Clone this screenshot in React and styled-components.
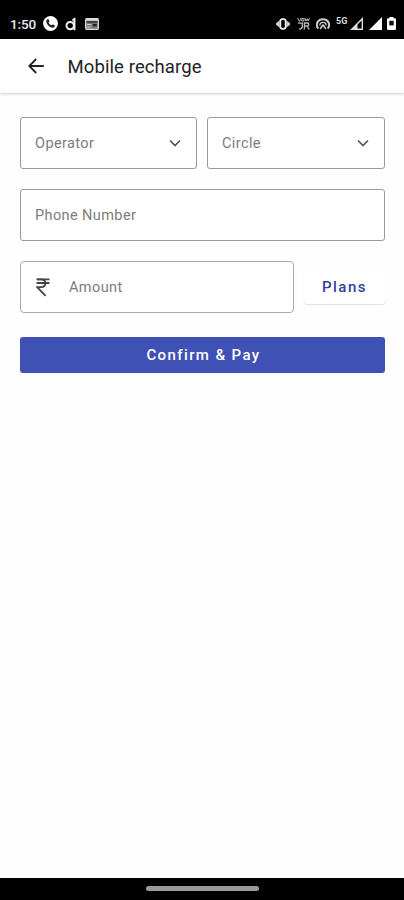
import { useState } from 'react';
import styled, { createGlobalStyle } from 'styled-components';

const CallIcon = () => (
  <svg width="15" height="15" viewBox="0 0 15 15">
    <circle cx="7.5" cy="7.5" r="7.4" fill="#fff" />
    <path
      d="M4.3 3.2 L6 3.4 L6.4 5.6 L5.7 6.4 C6.2 7.7 7.1 8.6 8.6 9.2 L9.5 8.5 L11.6 9 L11.7 10.7 C10.8 11.8 9.3 11.9 7.8 11.2 C5.8 10.3 4.4 8.8 3.6 6.9 C3 5.3 3.3 4 4.3 3.2Z"
      fill="#222"
    />
  </svg>
);

const DailyIcon = () => (
  <svg width="12" height="14" viewBox="0 0 12 14" fill="none" stroke="#f2f2f2">
    <circle cx="5.2" cy="8.6" r="3.7" strokeWidth="2" />
    <path d="M9.4 0.8V13.2" strokeWidth="2.1" />
    <path d="M7 2.9H9.4" strokeWidth="1.4" />
  </svg>
);

const NewsIcon = () => (
  <svg width="14" height="12" viewBox="0 0 14 12">
    <rect x="0.7" y="0.7" width="12.6" height="10.6" rx="1" fill="#777" stroke="#ddd" strokeWidth="1.3" />
    <path d="M1.2 1.7H12.8" stroke="#ddd" strokeWidth="2" />
    <path d="M1.4 4H12.6" stroke="#222" strokeWidth="1.2" />
    <path d="M2 6.5H6.5M2 9H6.5" stroke="#ccc" strokeWidth="1.2" />
    <rect x="7.8" y="6" width="4" height="2.2" fill="#222" />
  </svg>
);

const VibrateIcon = () => (
  <svg width="14" height="12" viewBox="0 0 14 12" fill="none" stroke="#eee">
    <rect x="4.3" y="1.2" width="5.4" height="9.6" rx="2.2" strokeWidth="1.8" />
    <path d="M3.8 2.2V9.8L0 6.8V5.2ZM10.2 2.2V9.8L14 6.8V5.2Z" fill="#ccc" stroke="none" />
  </svg>
);

const VoWifiIcon = () => (
  <svg width="13" height="13" viewBox="0 0 13 13" fill="none" stroke="#bbb" strokeWidth="1.3">
    <path d="M0.6 0.9L2.4 4.4L4.2 0.9M4.8 1.6H7V4H4.8ZM7.8 1L9 4L10.2 1.8L11.2 4L12.5 1" strokeWidth="1" />
    <path d="M1 6.2H5.3V9.5C5.3 11.2 4 12 2.2 12M7.4 12.5V6H10.3C12.3 6 12.3 9 10.3 9H8M10 9L12.2 12.4" />
  </svg>
);

const HotspotIcon = () => (
  <svg width="14" height="12" viewBox="0 0 14 12" fill="none" stroke="#ccc" strokeWidth="2">
    <path d="M2.4 10.4C-0.7 7.6 1.1 1.2 7 1.2S14.7 7.6 11.6 10.4" />
    <path d="M3.8 7.6C3.8 5.6 5.2 4.4 7 4.4S10.2 5.6 10.2 7.6" strokeWidth="1.3" />
    <path d="M7 6.8L4.2 11M7 6.8L9.8 11" strokeWidth="1.6" />
  </svg>
);

const SignalIcon = ({ partial }) => (
  <svg width="13" height="13" viewBox="0 0 13 13">
    {partial ? (
      <>
        <path d="M1.8 12.3L12.3 1.8V12.3Z" fill="none" stroke="#ddd" strokeWidth="1.4" />
        <path d="M1 12.8L7.5 6.3V12.8Z" fill="#ddd" />
      </>
    ) : (
      <path d="M0 13L13 0V13Z" fill="#fff" />
    )}
  </svg>
);

const BatteryIcon = () => (
  <svg width="9" height="13" viewBox="0 0 9 13">
    <path d="M2.5 0H6.5V1.3H7.8Q9 1.3 9 2.5V11.8Q9 13 7.8 13H1.2Q0 13 0 11.8V2.5Q0 1.3 1.2 1.3H2.5Z" fill="#fff" />
    <rect x="2.3" y="3.8" width="4.4" height="4.6" fill="#111" />
  </svg>
);

const BackIcon = () => (
  <svg width="16" height="16" viewBox="0 0 16 16" fill="none" stroke="#222" strokeWidth="1.8">
    <path d="M15.8 8H1.5M8.2 1L1.3 8L8.2 15" />
  </svg>
);

const ChevronIcon = () => (
  <svg width="12" height="8" viewBox="0 0 12 8" fill="none" stroke="#555" strokeWidth="1.7">
    <path d="M1 1.5L6 6.5L11 1.5" />
  </svg>
);

const RupeeIcon = () => (
  <svg width="14" height="19" viewBox="0 0 14 19" fill="none" stroke="#444" strokeWidth="1.8">
    <path d="M0.5 1.3H13.5M0.5 5H13.5" />
    <path d="M1.2 1.3H5C10.8 1.3 10.8 9.2 5 9.2H1.2L9.6 17.8" />
  </svg>
);

const App = () => {
  const [phone, setPhone] = useState('');
  const [amount, setAmount] = useState('');

  return (
    <Screen>
      <GlobalStyle />
      <StatusBar>
        <Clock>1:50</Clock>
        <StatusSlot $width={15} $gap={7}><CallIcon /></StatusSlot>
        <StatusSlot $width={12} $gap={7}><DailyIcon /></StatusSlot>
        <StatusSlot $width={14} $gap={8}><NewsIcon /></StatusSlot>
        <Spacer />
        <StatusSlot $width={14}><VibrateIcon /></StatusSlot>
        <StatusSlot $width={13} $gap={7}><VoWifiIcon /></StatusSlot>
        <StatusSlot $width={14} $gap={6}><HotspotIcon /></StatusSlot>
        <NetworkLabel>5G</NetworkLabel>
        <StatusSlot $width={13} $gap={2}><SignalIcon partial /></StatusSlot>
        <StatusSlot $width={13} $gap={6}><SignalIcon /></StatusSlot>
        <StatusSlot $width={9} $gap={5}><BatteryIcon /></StatusSlot>
      </StatusBar>

      <Header>
        <BackButton aria-label="Back"><BackIcon /></BackButton>
        <Title>Mobile recharge</Title>
      </Header>

      <Form onSubmit={e => e.preventDefault()}>
        <SelectRow>
          <Select type="button">
            <Label>Operator</Label>
            <ChevronIcon />
          </Select>
          <Select type="button">
            <Label>Circle</Label>
            <ChevronIcon />
          </Select>
        </SelectRow>

        <Field>
          <Input
            placeholder="Phone Number"
            value={phone}
            onChange={e => setPhone(e.target.value)}
          />
        </Field>

        <AmountRow>
          <Field $soft>
            <RupeeIcon />
            <Input
              $indent
              placeholder="Amount"
              value={amount}
              onChange={e => setAmount(e.target.value)}
            />
          </Field>
          <PlansButton type="button">Plans</PlansButton>
        </AmountRow>

        <PayButton type="submit">Confirm &amp; Pay</PayButton>
      </Form>

      <NavBar>
        <HomePill />
      </NavBar>
    </Screen>
  );
};

const GlobalStyle = createGlobalStyle`
  * {
    box-sizing: border-box;
  }

  body {
    margin: 0;
    background: #fefefe;
    font-family: Roboto, sans-serif;
  }

  svg {
    display: block;
    flex-shrink: 0;
  }
`;

const Screen = styled.div`
  display: flex;
  flex-direction: column;
  height: 100vh;
  min-height: 900px;
  overflow: hidden;
`;

const StatusBar = styled.div`
  display: flex;
  align-items: center;
  height: 39px;
  padding: 8px 8px 0 10px;
  background: #000;
  color: #eee;
`;

const Clock = styled.span`
  width: 26px;
  font-size: 13.5px;
  font-weight: 500;
  letter-spacing: -0.1px;
  line-height: 16px;
  white-space: nowrap;
`;

const StatusSlot = styled.span`
  display: flex;
  justify-content: center;
  width: ${props => props.$width}px;
  margin-left: ${props => props.$gap || 0}px;
`;

const Spacer = styled.div`
  flex: 1;
`;

const NetworkLabel = styled.span`
  width: 12px;
  margin: 0 0 6px 6px;
  font-size: 9px;
  font-weight: 700;
  line-height: 10px;
  color: #ddd;
`;

const Header = styled.header`
  display: flex;
  align-items: center;
  height: 54px;
  padding: 0 28px;
  background: #fff;
  box-shadow: 0 1px 3px rgba(0, 0, 0, 0.2);
`;

const Button = styled.button`
  padding: 0;
  border: none;
  font-family: inherit;
  cursor: pointer;
`;

const BackButton = styled(Button)`
  width: 16px;
  height: 16px;
  background: none;
`;

const Title = styled.h1`
  margin: 2px 0 0 23.5px;
  font-size: 18.5px;
  font-weight: 400;
  letter-spacing: 0.1px;
  line-height: 24px;
  color: #222;
`;

const Form = styled.form`
  display: flex;
  flex: 1;
  flex-direction: column;
  gap: 20px;
  padding: 24px 19px 0 20px;
`;

const SelectRow = styled.div`
  display: grid;
  grid-template-columns: 177px 178px;
  gap: 10px;
`;

const Select = styled(Button)`
  display: flex;
  align-items: center;
  justify-content: space-between;
  height: 52px;
  padding: 0 15px 0 14px;
  background: #fff;
  border: 1px solid #999;
  border-radius: 3px;
`;

const Label = styled.span`
  font-size: 14.5px;
  letter-spacing: 0.4px;
  color: #7c7c7c;
`;

const Field = styled.div`
  display: flex;
  align-items: center;
  height: 52px;
  padding: 0 14px ${props => (props.$soft ? '0 15px' : '')};
  background: #fff;
  border: 1px solid ${props => (props.$soft ? '#aaa' : '#999')};
  border-radius: ${props => (props.$soft ? 4 : 3)}px;
`;

const Input = styled.input`
  flex: 1;
  min-width: 0;
  margin-left: ${props => (props.$indent ? 19 : 0)}px;
  padding: 0;
  border: none;
  outline: none;
  background: none;
  font-family: inherit;
  font-size: 14.5px;
  letter-spacing: 0.4px;
  color: #222;

  &::placeholder {
    color: #7c7c7c;
  }
`;

const AmountRow = styled.div`
  display: grid;
  grid-template-columns: 274px 81px;
  align-items: center;
  gap: 10px;
`;

const PlansButton = styled(Button)`
  height: 34px;
  background: #fff;
  border-radius: 3px;
  box-shadow: 0 1px 1px rgba(0, 0, 0, 0.12);
  font-size: 15px;
  font-weight: 500;
  letter-spacing: 1.5px;
  color: #303f9f;
`;

const PayButton = styled(Button)`
  height: 36px;
  margin-top: 4px;
  padding-left: 2px;
  background: #3f51b5;
  border-radius: 3px;
  font-size: 15px;
  font-weight: 500;
  letter-spacing: 1.4px;
  color: #fff;
`;

const NavBar = styled.div`
  display: flex;
  justify-content: center;
  height: 22px;
  padding-top: 8px;
  background: #000;
`;

const HomePill = styled.div`
  width: 113px;
  height: 5px;
  border-radius: 3px;
  background: #999;
`;

export default App;
